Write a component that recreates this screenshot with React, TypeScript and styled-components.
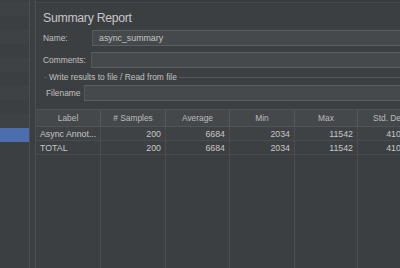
import React from "react";
import styled, { createGlobalStyle } from "styled-components";

const GlobalStyle = createGlobalStyle`
  html, body {
    margin: 0;
    padding: 0;
    background: #3c3f41;
    overflow: hidden;
  }
  * {
    box-sizing: border-box;
  }
`;

const Frame = styled.div`
  display: flex;
  width: 480px;
  height: 268px;
  background: #3c3f41;
  color: #bbbbbb;
  font-family: "Liberation Sans", Arial, sans-serif;
  font-size: 8.4px;
`;

const Sidebar = styled.div`
  width: 30px;
  flex-shrink: 0;
  padding-top: 2px;
  border-right: 1px solid #4d5052;
  display: flex;
  flex-direction: column;
`;

const TreeRow = styled.div<{ selected?: boolean; odd?: boolean }>`
  height: 14px;
  background: ${(p) =>
    p.selected ? "#4b6eaf" : p.odd ? "#3f4244" : "#3c3f41"};
`;

const Splitter = styled.div`
  width: 5px;
  flex-shrink: 0;
  border-right: 1px solid #4d5052;
  box-sizing: content-box;
`;

const Main = styled.div`
  flex: 1;
  display: flex;
  flex-direction: column;
  min-width: 0;
`;

const TopStrip = styled.div`
  height: 3px;
  background: #393b3d;
  border-bottom: 1px solid #45484a;
`;

const Title = styled.div`
  margin: 7px 0 0 7px;
  height: 16px;
  line-height: 16px;
  font-size: 12.3px;
  letter-spacing: -0.3px;
  color: #c6c6c6;
`;

const FieldRow = styled.div<{ top: number; labelWidth: number; indent: number }>`
  display: grid;
  grid-template-columns: ${(p) => p.labelWidth}px 1fr;
  align-items: center;
  margin-top: ${(p) => p.top}px;
  padding-left: ${(p) => p.indent}px;
  height: 16px;
`;

const FieldLabel = styled.span`
  white-space: nowrap;
  color: #c0c0c0;
`;

const TextBox = styled.div`
  height: 16px;
  background: #46494b;
  border: 1px solid #5c5f61;
  border-left-color: #55585a;
  padding: 0 6px;
  line-height: 14px;
  font-size: 8.8px;
  color: #c4c4c4;
`;

const GroupTitle = styled.div`
  display: flex;
  align-items: center;
  height: 12px;
  margin: 3px 0 0 8px;
  gap: 2px;
  color: #c0c0c0;

  &::before {
    content: "";
    width: 3px;
    height: 1px;
    background: #55585a;
  }
  &::after {
    content: "";
    flex: 1;
    height: 1px;
    background: #55585a;
  }
`;

const Table = styled.div`
  flex: 1;
  margin-top: 8px;
  display: flex;
  flex-direction: column;
`;

const cols = "65px 65px 64px 65px 63px 65px 65px";

const HeaderRow = styled.div`
  display: grid;
  grid-template-columns: ${cols};
  height: 18px;
  background: #45484a;
  border-top: 1px solid #4f5254;
  border-bottom: 1px solid #515456;
`;

const HeaderCell = styled.div`
  display: flex;
  align-items: center;
  justify-content: center;
  border-right: 1px solid #56595b;
  white-space: nowrap;
  overflow: hidden;
`;

const DataRow = styled.div<{ shade: string }>`
  display: grid;
  grid-template-columns: ${cols};
  height: 14px;
  background: ${(p) => p.shade};
  border-bottom: 1px solid #494c4e;
`;

const Cell = styled.div<{ align: "left" | "right" }>`
  display: flex;
  align-items: center;
  justify-content: ${(p) => (p.align === "left" ? "flex-start" : "flex-end")};
  padding: 0 4px;
  border-right: 1px solid #4b4e50;
  white-space: nowrap;
  overflow: hidden;
  color: #c6c6c6;
  font-size: 8.8px;
`;

const Filler = styled.div`
  flex: 1;
  display: grid;
  grid-template-columns: ${cols};
`;

const FillerCell = styled.div`
  border-right: 1px solid #4a4d4f;
`;

const headers = [
  "Label",
  "# Samples",
  "Average",
  "Min",
  "Max",
  "Std. Dev.",
  "Error %",
];

const rows = [
  ["Async Annot...", "200", "6684", "2034", "11542", "4103.27", "0.00%"],
  ["TOTAL", "200", "6684", "2034", "11542", "4103.27", "0.00%"],
];

const App: React.FC = () => {
  const treeRows = Array.from({ length: 10 }, (_, i) => i);
  return (
    <>
      <GlobalStyle />
      <Frame>
        <Sidebar>
          {treeRows.map((i) => (
            <TreeRow key={i} odd={i % 2 === 0} selected={i === 9} />
          ))}
        </Sidebar>
        <Splitter />
        <Main>
          <TopStrip />
          <Title>Summary Report</Title>
          <FieldRow top={4} labelWidth={49} indent={7}>
            <FieldLabel>Name:</FieldLabel>
            <TextBox>async_summary</TextBox>
          </FieldRow>
          <FieldRow top={6} labelWidth={48} indent={7}>
            <FieldLabel>Comments:</FieldLabel>
            <TextBox />
          </FieldRow>
          <GroupTitle>Write results to file / Read from file</GroupTitle>
          <FieldRow top={2} labelWidth={38} indent={10}>
            <FieldLabel>Filename</FieldLabel>
            <TextBox />
          </FieldRow>
          <Table>
            <HeaderRow>
              {headers.map((h) => (
                <HeaderCell key={h}>{h}</HeaderCell>
              ))}
            </HeaderRow>
            {rows.map((r, ri) => (
              <DataRow key={ri} shade={ri === 0 ? "#3f4244" : "#3d4042"}>
                {r.map((v, ci) => (
                  <Cell key={ci} align={ci === 0 ? "left" : "right"}>
                    {v}
                  </Cell>
                ))}
              </DataRow>
            ))}
            <Filler>
              {headers.map((h) => (
                <FillerCell key={h} />
              ))}
            </Filler>
          </Table>
        </Main>
      </Frame>
    </>
  );
};

export default App;
